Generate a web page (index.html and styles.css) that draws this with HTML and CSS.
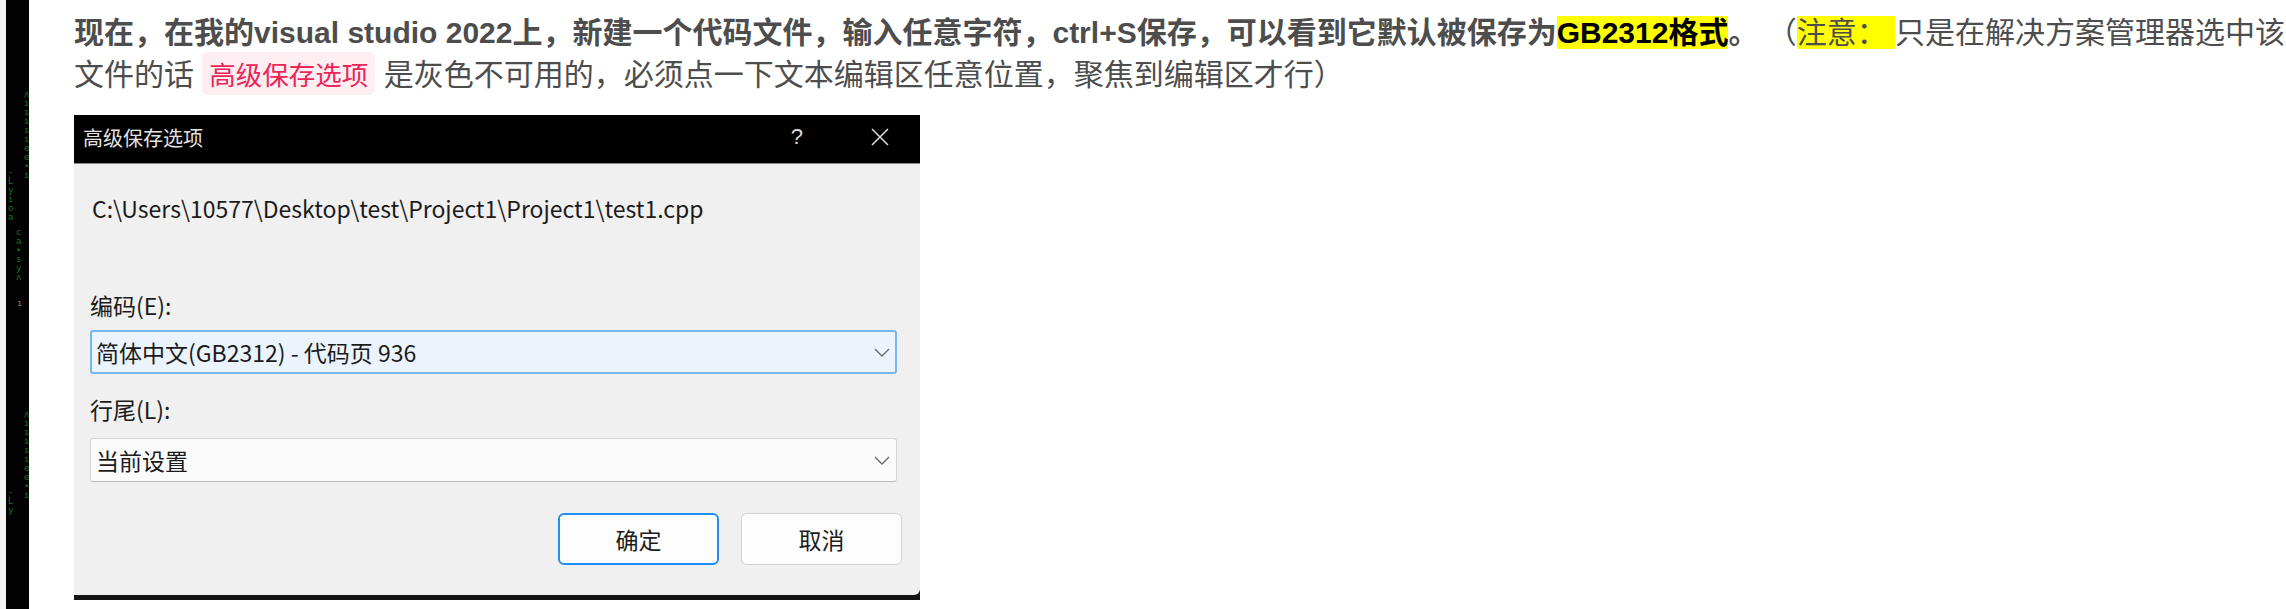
FILE: index.html
```html
<!DOCTYPE html>
<html lang="zh-CN">
<head>
<meta charset="utf-8">
<title>高级保存选项</title>
<link rel="stylesheet" href="styles.css">
</head>
<body>
<div class="page">
  <aside class="strip">
    <div class="edge"></div>
    <div class="matrix">
      <span class="rain r1">ʌ<br>ı<br>ı<br>ı<br>ı<br>ı<br>e<br>e<br>•<br>ı</span>
      <span class="rain r2">-<br>L<br>y<br>ı<br>o<br>a</span>
      <span class="rain r3">c<br>a<br>•<br>s<br>y<br>ʌ</span>
      <span class="rain r4">ʌ<br>ı<br>ı<br>ı<br>ı<br>ı<br>e<br>e<br>•<br>ı</span>
      <span class="rain r5">-<br>L<br>y</span>
      <span class="mark">ı</span>
    </div>
  </aside>
  <main class="content">
    <p class="para"><strong>现在，在我的visual studio 2022上，新建一个代码文件，输入任意字符，ctrl+S保存，可以看到它默认被保存为<mark class="hl-strong">GB2312格式</mark>。</strong> （<mark class="hl">注意： </mark> 只是在解决方案管理器选中该<br>文件的话 <code class="code">高级保存选项</code> 是灰色不可用的，必须点一下文本编辑区任意位置，聚焦到编辑区才行）</p>

    <div class="dialog">
      <div class="titlebar">
        <span class="title">高级保存选项</span>
        <div class="tb-btns">
          <span class="help">?</span>
          <svg class="close" width="18" height="18" viewBox="0 0 18 18"><path d="M1 1 L17 17 M17 1 L1 17" stroke="#d8d8d8" stroke-width="1.6" fill="none"/></svg>
        </div>
      </div>
      <div class="body">
        <div class="path">C:\Users\10577\Desktop\test\Project1\Project1\test1.cpp</div>
        <div class="label label-enc">编码(E):</div>
        <div class="select focused">
          <span>简体中文(GB2312) - 代码页 936</span>
          <svg class="chev" width="16" height="9" viewBox="0 0 16 9"><path d="M1 1 L8 8 L15 1" stroke="#6a6a6a" stroke-width="1.4" fill="none"/></svg>
        </div>
        <div class="label label-eol">行尾(L):</div>
        <div class="select">
          <span>当前设置</span>
          <svg class="chev" width="16" height="9" viewBox="0 0 16 9"><path d="M1 1 L8 8 L15 1" stroke="#6a6a6a" stroke-width="1.4" fill="none"/></svg>
        </div>
        <div class="buttons">
          <button class="btn primary">确定</button>
          <button class="btn">取消</button>
        </div>
      </div>
    </div>
  </main>
</div>
</body>
</html>
```
FILE: styles.css
```css
* { box-sizing: border-box; }
html, body { margin: 0; padding: 0; background: #ffffff; }
body { width: 2286px; height: 609px; overflow: hidden; }

.page { display: flex; height: 609px; }

.strip { display: flex; flex: 0 0 29px; height: 609px; }
.edge { width: 6px; background: #f5f5f5; }
.matrix { position: relative; width: 23px; background: #020202; overflow: hidden; }
.rain {
  position: absolute;
  font-family: "DejaVu Sans Mono", monospace;
  font-size: 9px;
  line-height: 9px;
  color: #0f7a12;
}
.r1 { left: 18px; top: 90px; }
.r2 { left: 2px; top: 168px; }
.r3 { left: 10px; top: 228px; }
.r4 { left: 18px; top: 410px; }
.r5 { left: 2px; top: 488px; }
.mark { position: absolute; left: 11px; top: 298px; font-size: 9px; color: #888; font-family: "DejaVu Sans Mono", monospace; }

.content { flex: 1; padding: 12px 0 0 45px; }

.para {
  margin: 0;
  font-family: "Liberation Sans", "Noto Sans CJK SC", sans-serif;
  font-size: 30px;
  line-height: 41px;
  color: #4d4d4d;
  white-space: nowrap;
}
.para strong { font-weight: 700; }
.hl-strong { background: #ffff00; color: #000000; }
.hl { background: #ffff00; color: #4d4d4d; }
.code {
  font-family: "Noto Sans CJK SC", sans-serif;
  font-size: 26.5px;
  color: #ec2558;
  background: #fdeef2;
  padding: 2px 7px;
  border-radius: 5px;
}

.dialog {
  width: 846px;
  margin-top: 20px;
  background: #141414;
  padding-bottom: 5px;
  font-family: "Noto Sans CJK SC", "Noto Sans", sans-serif;
  color: #1b1b1b;
}
.titlebar {
  height: 49px;
  background: #000000;
  border-bottom: 1px solid #8a8a8a;
  display: flex;
  align-items: center;
  justify-content: space-between;
  padding: 0 31px 4px 9px;
}
.title { color: #e2e2e2; font-size: 20px; }
.tb-btns { display: flex; align-items: center; gap: 68px; }
.help { color: #d8d8d8; font-size: 22px; font-family: "Liberation Sans", sans-serif; }
.close { display: block; }

.body {
  background: #f0f0f0;
  padding: 30px 23px 30px 16px;
  border-bottom-right-radius: 6px;
}
.path { font-size: 23px; line-height: 28px; padding-left: 2px; }
.label { font-size: 23px; line-height: 28px; }
.label-enc { margin-top: 69px; }
.label-eol { margin-top: 21px; }

.select {
  height: 44px;
  margin-top: 11px;
  display: flex;
  align-items: center;
  justify-content: space-between;
  padding: 0 6px 0 5px;
  font-size: 23px;
  background: #fbfbfb;
  border: 1px solid #d6d6d6;
  border-bottom-color: #bcbcbc;
  border-radius: 3px;
}
.label-eol + .select { margin-top: 15px; }
.select.focused {
  background: #ebf4fd;
  border: 2px solid #78b7ee;
  padding-left: 4px;
  padding-right: 5px;
}

.buttons { display: flex; justify-content: flex-end; gap: 22px; margin-top: 31px; margin-right: -5px; }
.btn {
  width: 161px;
  height: 52px;
  font-family: "Noto Sans CJK SC", sans-serif;
  font-size: 23px;
  color: #1b1b1b;
  background: #fdfdfd;
  border: 1px solid #d2d2d2;
  border-radius: 6px;
}
.btn.primary { border: 2px solid #1f8ff5; }
```
